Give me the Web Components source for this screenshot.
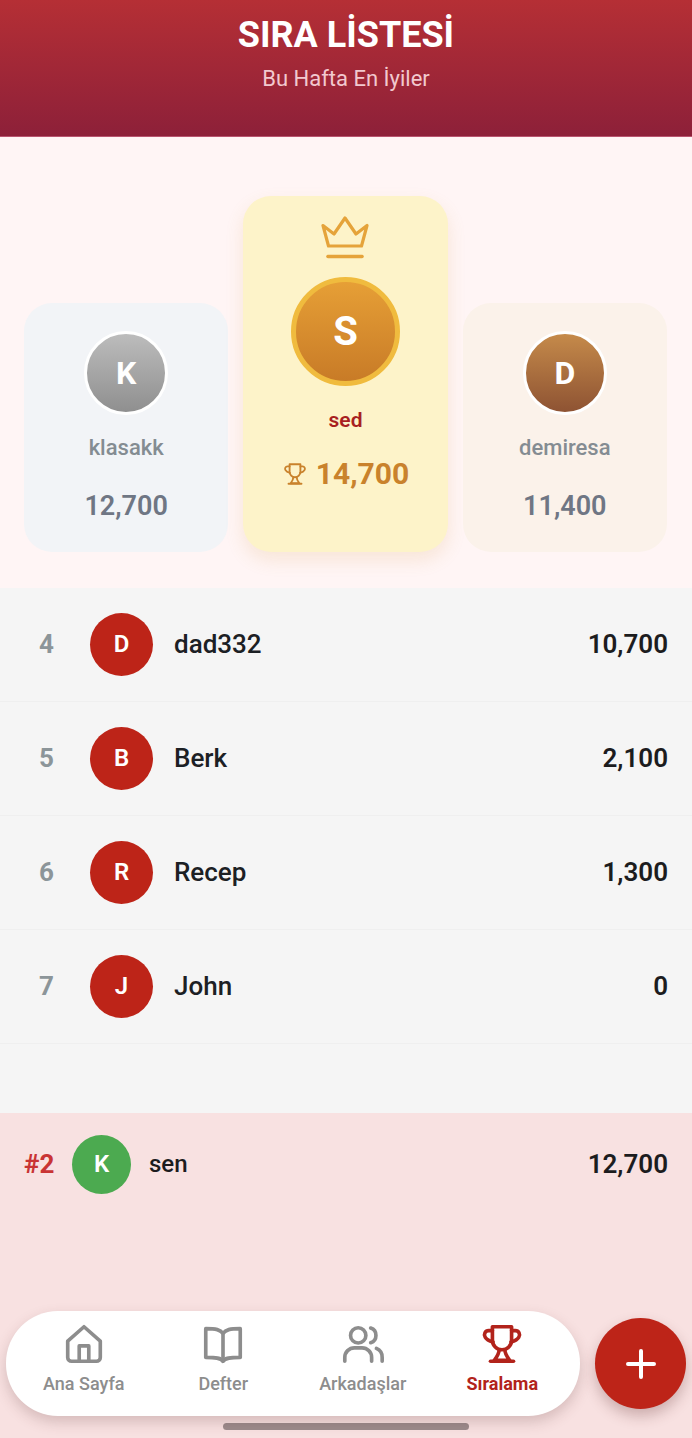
<!DOCTYPE html>
<html lang="tr">
<head>
<meta charset="utf-8">
<title>Sıra Listesi</title>
<style>
  html, body { margin: 0; padding: 0; }
  body { font-family: Roboto, "Liberation Sans", sans-serif; background: #f8e1e1; }
</style>
</head>
<body>
<leaderboard-page>
  <leader-header slot="header" title-text="SIRA LİSTESİ" subtitle="Bu Hafta En İyiler"></leader-header>
  <podium-card slot="podium" kind="silver" letter="K" name="klasakk" score="12,700"></podium-card>
  <podium-card slot="podium" kind="gold" letter="S" name="sed" score="14,700"></podium-card>
  <podium-card slot="podium" kind="bronze" letter="D" name="demiresa" score="11,400"></podium-card>
  <rank-row slot="list" rank="4" letter="D" name="dad332" score="10,700"></rank-row>
  <rank-row slot="list" rank="5" letter="B" name="Berk" score="2,100"></rank-row>
  <rank-row slot="list" rank="6" letter="R" name="Recep" score="1,300"></rank-row>
  <rank-row slot="list" rank="7" letter="J" name="John" score="0"></rank-row>
  <my-row slot="me" rank="#2" letter="K" name="sen" score="12,700"></my-row>
  <bottom-nav slot="nav">
    <nav-item icon="home" label="Ana Sayfa"></nav-item>
    <nav-item icon="book" label="Defter"></nav-item>
    <nav-item icon="users" label="Arkadaşlar"></nav-item>
    <nav-item icon="trophy" label="Sıralama" active></nav-item>
  </bottom-nav>
  <fab-button slot="nav"></fab-button>
</leaderboard-page>

<script>
// ikonlar
const TROPHY = '<path d="M7 3h10v7a5 5 0 0 1-10 0z"/><path d="M7 5H5a2.2 2.2 0 0 0-1.8 3.4C4 9.8 5.500 10.500 7.300 11"/><path d="M17 5h2a2.200 2.200 0 0 1 1.800 3.400C20 9.800 18.500 10.500 16.700 11"/><path d="M10.500 15c0 2-1 3.500-2.500 5.500h8c-1.500-2-2.500-3.500-2.500-5.500"/><path d="M6 21h12"/>';
const ICONS = {
  home: '<path d="M3.500 10.500 12 3l8.500 7.500V19a2 2 0 0 1-2 2h-13a2 2 0 0 1-2-2z"/><path d="M9.500 21v-8h5v8"/>',
  book: '<path d="M12 6.500C10.500 4.500 8.500 4 3 4v15c5.500 0 8 .3 9 2 1-1.700 3.500-2 9-2V4c-5.500 0-7.500.5-9 2.500z"/><path d="M12 6.500V21"/>',
  users: '<circle cx="9.500" cy="7.500" r="4"/><path d="M2.500 21v-2a5 5 0 0 1 5-5h4a5 5 0 0 1 5 5v2"/><path d="M16 3.700a4 4 0 0 1 0 7.600"/><path d="M19 14.300a5 5 0 0 1 3 4.700v2"/>',
  trophy: TROPHY
};

class LeaderboardPage extends HTMLElement {
  constructor() {
    super();
    this.attachShadow({ mode: 'open' });
    this.shadowRoot.innerHTML = `
      <style>
        :host { display: flex; flex-direction: column; height: 1438px; overflow: hidden; }
        .podium { height: 451px; box-sizing: border-box; background: #fff5f5; display: flex; align-items: flex-end;
                  gap: 15px; padding: 0 25px 36px 24px; }
        .list { height: 525px; background: #f5f5f5; display: flex; flex-direction: column; }
        .bottom { flex: 1; background: #f8e1e1; display: flex; flex-direction: column; }
        .nav { margin-top: auto; display: flex; align-items: center; gap: 15px; padding: 0 6px 22px 6px; position: relative; }
        .indicator { position: absolute; left: 223px; bottom: 8px; width: 246px; height: 7px; border-radius: 4px; background: #9c8b8c; }
      </style>
      <slot name="header"></slot>
      <div class="podium"><slot name="podium"></slot></div>
      <div class="list"><slot name="list"></slot></div>
      <div class="bottom">
        <slot name="me"></slot>
        <div class="nav"><slot name="nav"></slot><div class="indicator"></div></div>
      </div>`;
  }
}

class LeaderHeader extends HTMLElement {
  constructor() {
    super();
    this.attachShadow({ mode: 'open' });
  }
  connectedCallback() {
    this.shadowRoot.innerHTML = `
      <style>
        :host { display: flex; flex-direction: column; align-items: center; height: 137px; box-sizing: border-box;
                padding-top: 13px; background: linear-gradient(180deg, #b52f35 0%, #8d2039 100%); border-bottom: 1px solid #b9546f; }
        h1 { margin: 0; font-size: 36px; line-height: 44px; font-weight: 700; color: #fff; }
        p { margin: 7px 0 0; font-size: 22px; line-height: 30px; font-weight: 400; color: #f2c9cf; }
      </style>
      <h1>${this.getAttribute('title-text')}</h1>
      <p>${this.getAttribute('subtitle')}</p>`;
  }
}

class PodiumCard extends HTMLElement {
  constructor() {
    super();
    this.attachShadow({ mode: 'open' });
  }
  connectedCallback() {
    const kind = this.getAttribute('kind');
    const gold = kind === 'gold';
    const crown = gold ? `<svg class="crown" width="48" height="44" viewBox="0 0 48 44" fill="none" stroke="#e5a33a" stroke-width="3.200" stroke-linejoin="round" stroke-linecap="round">
        <path d="M2 9.500 13 18 24 2 35 18 46 9.500 40.500 30H7.500z"/><path d="M7 40.500h34" stroke-width="3.600"/></svg>` : '';
    const cup = gold ? `<svg width="26" height="26" viewBox="0 0 24 24" fill="none" stroke="#c9822c" stroke-width="1.700" stroke-linecap="round" stroke-linejoin="round">${TROPHY}</svg>` : '';
    this.shadowRoot.innerHTML = `
      <style>
        :host { flex: 1 1 0; min-width: 0; display: flex; flex-direction: column; align-items: center; box-sizing: border-box;
                height: 249px; padding-top: 28px; border-radius: 28px; }
        :host([kind=silver]) { background: #f2f4f7; }
        :host([kind=bronze]) { background: #fbf2ea; }
        :host([kind=gold]) { background: #fdf3c9; height: 356px; padding-top: 20px; box-shadow: 0 8px 18px rgba(214,150,60,.16); }
        .avatar { width: 84px; height: 84px; box-sizing: border-box; border-radius: 50%; border: 3px solid #fff;
                  display: flex; align-items: center; justify-content: center; color: #fff; font-size: 32px; font-weight: 700; }
        :host([kind=silver]) .avatar { background: linear-gradient(180deg, #bcbcbc, #8f8f8f); }
        :host([kind=bronze]) .avatar { background: linear-gradient(180deg, #c58a4a, #8e5333); }
        :host([kind=gold]) .avatar { width: 109px; height: 109px; border: 5px solid #f0bb3e; font-size: 40px; margin-top: 17px;
                  background: linear-gradient(180deg, #e69f36, #c87b27); }
        .crown { display: block; margin-bottom: 0; height: 44px; }
        .name { margin-top: 19px; font-size: 22px; line-height: 28px; font-weight: 500; color: #848c92; }
        :host([kind=gold]) .name { margin-top: 20px; font-size: 21px; color: #a81f1f; font-weight: 600; }
        .score { margin-top: 27px; display: flex; align-items: center; gap: 8px; font-size: 27px; line-height: 34px; font-weight: 600; color: #6f7684; }
        :host([kind=gold]) .score { margin-top: 23px; font-size: 30px; font-weight: 700; color: #c9822c; }
      </style>
      ${crown}
      <div class="avatar">${this.getAttribute('letter')}</div>
      <div class="name">${this.getAttribute('name')}</div>
      <div class="score">${cup}<span>${this.getAttribute('score')}</span></div>`;
  }
}

class RankRow extends HTMLElement {
  constructor() {
    super();
    this.attachShadow({ mode: 'open' });
  }
  connectedCallback() {
    this.shadowRoot.innerHTML = `
      <style>
        :host { display: flex; align-items: center; height: 114px; box-sizing: border-box; padding: 0 24px 1px 0;
                border-bottom: 1px solid #efefef; }
        .rank { width: 90px; box-sizing: border-box; padding-left: 39px; font-size: 26px; font-weight: 700; color: #8c9599; }
        .avatar { width: 63px; height: 63px; border-radius: 50%; background: #bd2418; color: #fff; font-size: 24px; font-weight: 600;
                  display: flex; align-items: center; justify-content: center; }
        .name { margin-left: 21px; flex: 1; font-size: 26px; font-weight: 500; color: #1c2024; }
        .score { font-size: 26px; font-weight: 600; color: #1c1c1e; }
      </style>
      <span class="rank">${this.getAttribute('rank')}</span>
      <div class="avatar">${this.getAttribute('letter')}</div>
      <span class="name">${this.getAttribute('name')}</span>
      <span class="score">${this.getAttribute('score')}</span>`;
  }
}

class MyRow extends HTMLElement {
  constructor() {
    super();
    this.attachShadow({ mode: 'open' });
  }
  connectedCallback() {
    this.shadowRoot.innerHTML = `
      <style>
        :host { display: flex; align-items: center; height: 102px; box-sizing: border-box; padding: 0 24px 0 24px; }
        .rank { width: 48px; font-size: 26px; font-weight: 700; color: #c93434; }
        .avatar { width: 59px; height: 59px; border-radius: 50%; background: #4caa50; color: #fff; font-size: 24px; font-weight: 600;
                  display: flex; align-items: center; justify-content: center; }
        .name { margin-left: 18px; flex: 1; font-size: 24px; font-weight: 500; color: #1c1c1e; }
        .score { font-size: 26px; font-weight: 600; color: #1c1c1e; }
      </style>
      <span class="rank">${this.getAttribute('rank')}</span>
      <div class="avatar">${this.getAttribute('letter')}</div>
      <span class="name">${this.getAttribute('name')}</span>
      <span class="score">${this.getAttribute('score')}</span>`;
  }
}

class BottomNav extends HTMLElement {
  constructor() {
    super();
    this.attachShadow({ mode: 'open' });
    this.shadowRoot.innerHTML = `
      <style>
        :host { display: flex; width: 574px; height: 105px; box-sizing: border-box; padding: 0 8px; background: #fff; border-radius: 52px;
                box-shadow: 0 6px 14px rgba(90,50,50,.22); position: relative; z-index: 1; }
      </style>
      <slot></slot>`;
  }
}

class NavItem extends HTMLElement {
  constructor() {
    super();
    this.attachShadow({ mode: 'open' });
  }
  connectedCallback() {
    this.shadowRoot.innerHTML = `
      <style>
        :host { flex: 1; display: flex; flex-direction: column; align-items: center; padding-top: 10px; color: #8d8d8d; }
        :host([active]) { color: #b2231b; }
        svg { display: block; }
        span { margin-top: 5px; font-size: 18px; line-height: 24px; font-weight: 500; }
        :host([active]) span { font-weight: 700; }
      </style>
      <svg width="46" height="46" viewBox="0 0 24 24" fill="none" stroke="currentColor" stroke-width="1.900" stroke-linecap="round" stroke-linejoin="round">${ICONS[this.getAttribute('icon')]}</svg>
      <span>${this.getAttribute('label')}</span>`;
  }
}

class FabButton extends HTMLElement {
  constructor() {
    super();
    this.attachShadow({ mode: 'open' });
    this.shadowRoot.innerHTML = `
      <style>
        :host { flex: none; width: 91px; height: 91px; border-radius: 50%; background: #bd2418; display: flex; align-items: center; justify-content: center;
                box-shadow: 0 7px 14px rgba(90,40,40,.28); position: relative; z-index: 1; }
      </style>
      <svg width="32" height="32" viewBox="0 0 32 32" stroke="#fff" stroke-width="4" stroke-linecap="round"><path d="M16 3v26M3 16h26"/></svg>`;
  }
}

customElements.define('leaderboard-page', LeaderboardPage);
customElements.define('leader-header', LeaderHeader);
customElements.define('podium-card', PodiumCard);
customElements.define('rank-row', RankRow);
customElements.define('my-row', MyRow);
customElements.define('bottom-nav', BottomNav);
customElements.define('nav-item', NavItem);
customElements.define('fab-button', FabButton);
</script>
</body>
</html>
